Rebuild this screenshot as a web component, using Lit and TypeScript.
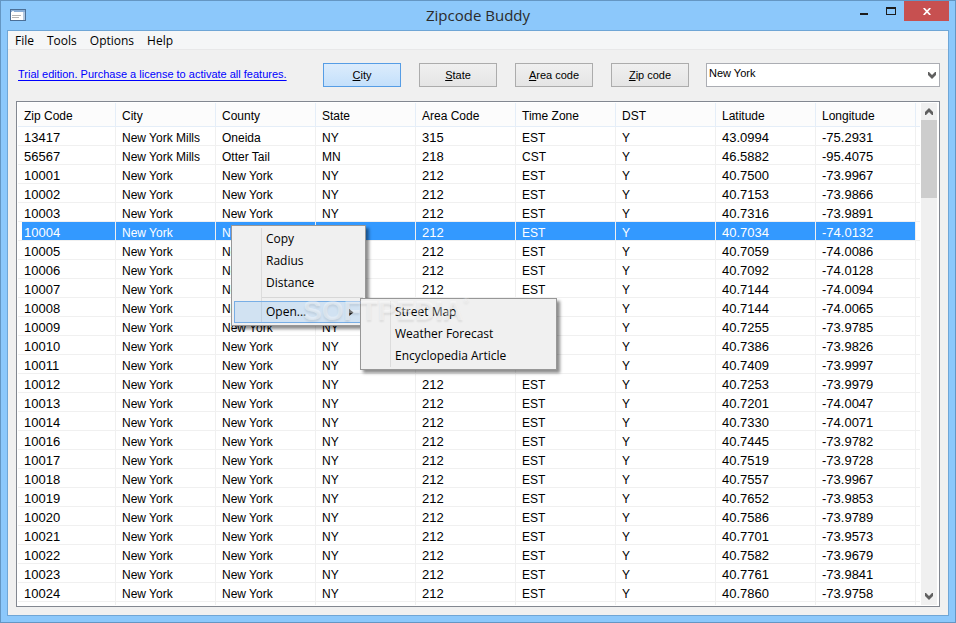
import { LitElement, html, css, svg } from "lit";
import { customElement, state } from "lit/decorators.js";
import { classMap } from "lit/directives/class-map.js";

const COLUMNS = ["Zip Code", "City", "County", "State", "Area Code", "Time Zone", "DST", "Latitude", "Longitude"];

const ny = (zip: string, lat: string, lon: string): string[] =>
  [zip, "New York", "New York", "NY", "212", "EST", "Y", lat, lon];

const ROWS: string[][] = [
  ["13417", "New York Mills", "Oneida", "NY", "315", "EST", "Y", "43.0994", "-75.2931"],
  ["56567", "New York Mills", "Otter Tail", "MN", "218", "CST", "Y", "46.5882", "-95.4075"],
  ny("10001", "40.7500", "-73.9967"),
  ny("10002", "40.7153", "-73.9866"),
  ny("10003", "40.7316", "-73.9891"),
  ny("10004", "40.7034", "-74.0132"),
  ny("10005", "40.7059", "-74.0086"),
  ny("10006", "40.7092", "-74.0128"),
  ny("10007", "40.7144", "-74.0094"),
  ny("10008", "40.7144", "-74.0065"),
  ny("10009", "40.7255", "-73.9785"),
  ny("10010", "40.7386", "-73.9826"),
  ny("10011", "40.7409", "-73.9997"),
  ny("10012", "40.7253", "-73.9979"),
  ny("10013", "40.7201", "-74.0047"),
  ny("10014", "40.7330", "-74.0071"),
  ny("10016", "40.7445", "-73.9782"),
  ny("10017", "40.7519", "-73.9728"),
  ny("10018", "40.7557", "-73.9967"),
  ny("10019", "40.7652", "-73.9853"),
  ny("10020", "40.7586", "-73.9789"),
  ny("10021", "40.7701", "-73.9573"),
  ny("10022", "40.7582", "-73.9679"),
  ny("10023", "40.7761", "-73.9841"),
  ny("10024", "40.7860", "-73.9758"),
];

const chevron = (up: boolean) => html`<svg width="8" height="7" viewBox="0 0 8 7" aria-hidden="true">
  ${svg`<path d=${up ? "M0 4 L4 0 L8 4 V7 H7 L4 4 L1 7 H0 Z" : "M0 3 L4 7 L8 3 V0 H7 L4 3 L1 0 H0 Z"} fill="#606060"/>`}
</svg>`;

@customElement("zip-table")
class ZipTable extends LitElement {
  static styles = css`
    :host { display: block; }
    table {
      width: 100%;
      border-collapse: separate;
      border-spacing: 0;
      table-layout: fixed;
      font: 12px/14px "Liberation Sans", Arial, sans-serif;
      color: #000;
    }
    .col { width: 100px; }
    .first { width: 98px; }
    th, td {
      box-sizing: border-box;
      padding: 4px 0 0 6px;
      text-align: left;
      font-weight: normal;
      white-space: nowrap;
      overflow: hidden;
      background-clip: padding-box;
      border-right: 1px solid #f0f0f0;
      border-bottom: 1px solid #f0f0f0;
    }
    th {
      height: 24px;
      padding-top: 2px;
      background-color: #fcfcfc;
      border-color: #e5eef8;
    }
    td { height: 19px; }
    .num { font-size: 13px; }
    .selected td { background-color: #3399ff; color: #fff; }
    .selected td:first-child {
      background-color: transparent;
      background-image: linear-gradient(to right, #fff 4px, #3399ff 4px);
    }
    th.filler, td.filler { padding: 0; border-right: 0; }
    .selected td.filler { background-color: #fff; }
    .tail td { height: 3px; padding: 0; line-height: 0; border-bottom: 0; }
  `;

  @state() private selected = "10004";

  render() {
    return html`<table>
      <colgroup>
        ${COLUMNS.map((_, i) => html`<col class=${i === 0 ? "first" : "col"} />`)}
        <col />
      </colgroup>
      <thead>
        <tr>${COLUMNS.map((c) => html`<th scope="col">${c}</th>`)}<th class="filler"></th></tr>
      </thead>
      <tbody>
        ${ROWS.map((row) => html`<tr
          class=${classMap({ selected: row[0] === this.selected })}
          @click=${() => (this.selected = row[0])}
        >${row.map((v) => html`<td class=${classMap({ num: /\d/.test(v) })}>${v}</td>`)}<td class="filler"></td></tr>`)}
        <tr class="tail" aria-hidden="true">
          ${COLUMNS.map(() => html`<td></td>`)}<td class="filler"></td>
        </tr>
      </tbody>
    </table>`;
  }
}

@customElement("popup-menus")
class PopupMenus extends LitElement {
  static styles = css`
    .menu {
      position: absolute;
      box-sizing: border-box;
      padding: 2px;
      border: 1px solid #979797;
      background: linear-gradient(to right, transparent 29px, #dcdcdc 29px, #dcdcdc 30px, transparent 30px) 0 2px / 100% calc(100% - 4px) no-repeat #f0f0f0;
      box-shadow: 3px 3px 3px rgba(0, 0, 0, 0.45);
    }
    .context { left: 214px; top: 123px; width: 135px; }
    .sub { left: 343px; top: 196px; width: 197px; }
    .item {
      display: flex;
      align-items: center;
      justify-content: space-between;
      box-sizing: border-box;
      width: 100%;
      height: 22px;
      margin: 0;
      padding: 0 8px 0 31px;
      border: 1px solid transparent;
      background: none;
      font: 12px/20px "Open Sans", "Noto Sans", sans-serif;
      color: #000;
      text-align: left;
      white-space: nowrap;
    }
    .open { border-color: #78aee5; background: rgba(51, 153, 255, 0.16); }
    .rule { height: 1px; margin: 3px 0 3px 28px; background: #d7d7d7; }
    .mark {
      position: absolute;
      left: 286px;
      top: 193px;
      display: flex;
      align-items: flex-start;
      font: bold 28px/32px "Liberation Sans", Arial, sans-serif;
      color: rgba(255, 255, 255, 0.4);
      text-shadow: 0 2px 2px rgba(0, 0, 0, 0.08);
      pointer-events: none;
    }
    .reg { font-size: 8px; line-height: 12px; }
  `;

  render() {
    return html`
      <div class="menu context" role="menu">
        <button class="item" role="menuitem">Copy</button>
        <button class="item" role="menuitem">Radius</button>
        <button class="item" role="menuitem">Distance</button>
        <div class="rule" role="separator"></div>
        <button class="item open" role="menuitem" aria-haspopup="menu" aria-expanded="true">
          Open...
          <svg width="5" height="7" viewBox="0 0 5 7" aria-hidden="true"><path d="M0 0 L4.5 3.5 L0 7 Z" fill="#222" /></svg>
        </button>
      </div>
      <div class="menu sub" role="menu">
        <button class="item" role="menuitem">Street Map</button>
        <button class="item" role="menuitem">Weather Forecast</button>
        <button class="item" role="menuitem">Encyclopedia Article</button>
      </div>
      <div class="mark">SOFTPEDIA<span class="reg">®</span></div>
    `;
  }
}

@customElement("app-root")
class AppRoot extends LitElement {
  static styles = css`
    :host { display: block; }
    .window {
      display: flex;
      flex-direction: column;
      box-sizing: border-box;
      min-height: 100vh;
      padding: 0 6px 6px;
      border: 1px solid #6496c3;
      background: #8cc8fb;
    }
    .titlebar {
      display: grid;
      grid-template-columns: 1fr auto 1fr;
      height: 29px;
    }
    .appicon { margin: 8px 0 0 3px; }
    .title {
      margin: 0;
      font: 15px/29px "Open Sans", "Noto Sans", sans-serif;
      color: #2b2b2b;
    }
    .controls { display: flex; justify-content: flex-end; }
    .control {
      display: flex;
      align-items: center;
      justify-content: center;
      width: 27px;
      height: 20px;
      padding: 0;
      border: 0;
      background: none;
    }
    .close { width: 45px; background: #c75050; }
    .client {
      flex: 1;
      display: flex;
      flex-direction: column;
      border: 1px solid #6fa6d6;
      background: #f0f0f0;
    }
    .menubar {
      display: flex;
      gap: 13px;
      height: 18px;
      padding-left: 7px;
      border-bottom: 1px solid #e8e8e9;
      background: #f5f6f7;
    }
    .menubar button {
      padding: 2px 0 0;
      border: 0;
      background: none;
      font: 12px/16px "Open Sans", "Noto Sans", sans-serif;
      color: #000;
    }
    .toolbar {
      display: flex;
      align-items: center;
      gap: 17px;
      padding: 13px 8px 14px 10px;
      font: 11px/16px "Liberation Sans", Arial, sans-serif;
    }
    .trial {
      flex: 1;
      padding-bottom: 2px;
      color: #0000ff;
      white-space: nowrap;
      text-underline-offset: 2px;
    }
    .filters { display: flex; gap: 18px; }
    .filter {
      box-sizing: border-box;
      width: 78px;
      height: 24px;
      padding: 0;
      border: 1px solid #acacac;
      background: linear-gradient(#f0f0f0, #e5e5e5);
      font: inherit;
      color: #000;
    }
    .filter.active {
      border-color: #569de5;
      background: linear-gradient(#dcecfc, #c4e0fb);
    }
    .combo { position: relative; width: 234px; height: 24px; }
    .combo select {
      appearance: none;
      box-sizing: border-box;
      width: 100%;
      height: 24px;
      padding: 0 20px 4px 2px;
      border: 1px solid #abadb3;
      border-radius: 0;
      background: #fff;
      font: inherit;
      color: #000;
    }
    .combo svg { position: absolute; right: 4px; top: 9px; pointer-events: none; }
    .list {
      position: relative;
      flex: 1;
      display: flex;
      gap: 1px;
      margin: 0 8px 8px;
      padding: 1px;
      border: 1px solid #828790;
      background: #fff;
    }
    .list zip-table { flex: 1; min-width: 0; }
    .scrollbar {
      display: flex;
      flex-direction: column;
      width: 16px;
      background: #f0f0f0;
    }
    .arrow {
      display: flex;
      align-items: center;
      justify-content: center;
      height: 17px;
      padding: 0;
      border: 0;
      background: none;
    }
    .track { flex: 1; }
    .thumb { height: 78px; background: #cdcdcd; }
  `;

  @state() private active = 0;

  private filters = [["C", "ity"], ["S", "tate"], ["A", "rea code"], ["Z", "ip code"]];

  render() {
    return html`
      <div class="window">
        <header class="titlebar">
          <svg class="appicon" width="16" height="12" viewBox="0 0 16 12" aria-hidden="true">
            <rect x="0.5" y="0.5" width="15" height="11" fill="#fff" stroke="#4b6f97" />
            <rect x="1" y="1" width="14" height="2" fill="#8aaed6" />
            <rect x="2" y="2" width="2" height="1" fill="#e8f2fc" />
            <rect x="13" y="3" width="2" height="8" fill="#b4c9e0" />
            <path d="M2 6.5 H11 M2 8.5 H9" stroke="#b5b5b5" />
          </svg>
          <h1 class="title">Zipcode Buddy</h1>
          <div class="controls">
            <button class="control" aria-label="Minimize">
              <svg width="8" height="8" viewBox="0 0 8 8"><path d="M0 6 H8 V8 H0 Z" fill="#1c1c1c" /></svg>
            </button>
            <button class="control" aria-label="Maximize">
              <svg width="10" height="8" viewBox="0 0 10 8"><path d="M0 0 H10 V8 H0 Z M1 2 V7 H9 V2 Z" fill="#1c1c1c" fill-rule="evenodd" /></svg>
            </button>
            <button class="control close" aria-label="Close">
              <svg width="8" height="7" viewBox="0 0 8 7"><path d="M0.7 0 L7.3 7 M7.3 0 L0.7 7" stroke="#fff" stroke-width="1.7" /></svg>
            </button>
          </div>
        </header>
        <main class="client">
          <nav class="menubar">
            ${["File", "Tools", "Options", "Help"].map((m) => html`<button>${m}</button>`)}
          </nav>
          <div class="toolbar">
            <a class="trial" href="#license">Trial edition. Purchase a license to activate all features.</a>
            <div class="filters">
              ${this.filters.map(([key, rest], i) => html`<button
                class=${classMap({ filter: true, active: i === this.active })}
                @click=${() => (this.active = i)}
              ><u>${key}</u>${rest}</button>`)}
            </div>
            <div class="combo">
              <select aria-label="Search value"><option>New York</option></select>
              ${chevron(false)}
            </div>
          </div>
          <section class="list">
            <zip-table></zip-table>
            <div class="scrollbar">
              <button class="arrow" aria-label="Scroll up">${chevron(true)}</button>
              <div class="track"><div class="thumb"></div></div>
              <button class="arrow" aria-label="Scroll down">${chevron(false)}</button>
            </div>
            <popup-menus></popup-menus>
          </section>
        </main>
      </div>
    `;
  }
}
